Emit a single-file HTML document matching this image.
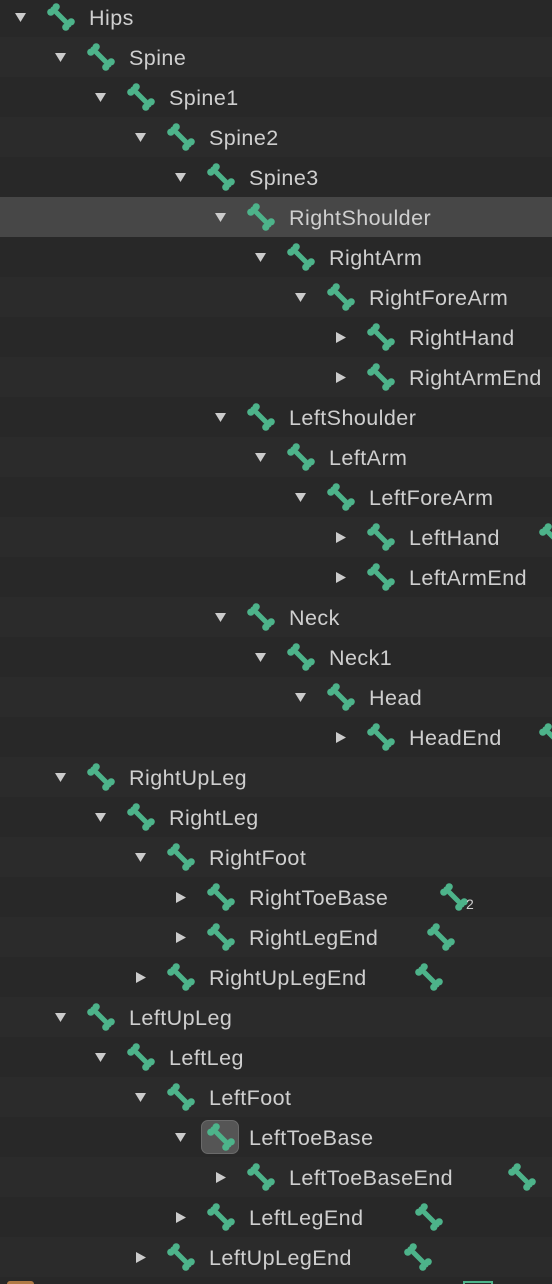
<!DOCTYPE html>
<html><head><meta charset="utf-8"><style>
html,body{margin:0;width:552px;height:1284px;overflow:hidden;background:#282828;font-family:"Liberation Sans",sans-serif;position:relative}
.r{position:absolute;left:0;width:552px;height:40px}
.a{background:#282828}.b{background:#2b2b2b}.h{background:#474747}
.t{position:absolute;top:1px;line-height:40px;color:#cfcfcf;font-size:21.5px;letter-spacing:0.45px;white-space:nowrap}
svg{position:absolute}
.n{position:absolute;color:#cfcfcf;font-size:14px}
</style></head><body>
<svg width="0" height="0" style="position:absolute"><defs>
<g id="bone"><line x1="6" y1="6" x2="22" y2="22" stroke="#4db38a" stroke-width="5" stroke-linecap="round"/><circle cx="3.8" cy="9.2" r="3.6" fill="#4db38a"/><circle cx="9.2" cy="3.8" r="3.6" fill="#4db38a"/><circle cx="18.8" cy="24.2" r="3.6" fill="#4db38a"/><circle cx="24.2" cy="18.8" r="3.6" fill="#4db38a"/></g>
<polygon id="down" points="0,0 11,0 5.5,9" fill="#cccccc"/>
<polygon id="right" points="0,0 10,5.5 0,11" fill="#cccccc"/>
</defs></svg>
<div id="c"></div>
<script>
var rows=[
[0,'Hips','d'],[1,'Spine','d'],[2,'Spine1','d'],[3,'Spine2','d'],[4,'Spine3','d'],
[5,'RightShoulder','d',0,1],[6,'RightArm','d'],[7,'RightForeArm','d'],[8,'RightHand','r'],[8,'RightArmEnd','r'],
[5,'LeftShoulder','d'],[6,'LeftArm','d'],[7,'LeftForeArm','d'],[8,'LeftHand','r',552],[8,'LeftArmEnd','r'],
[5,'Neck','d'],[6,'Neck1','d'],[7,'Head','d'],[8,'HeadEnd','r',552],
[1,'RightUpLeg','d'],[2,'RightLeg','d'],[3,'RightFoot','d'],[4,'RightToeBase','r',453,0,'2'],[4,'RightLegEnd','r',440],[3,'RightUpLegEnd','r',428],
[1,'LeftUpLeg','d'],[2,'LeftLeg','d'],[3,'LeftFoot','d'],[4,'LeftToeBase','d',0,0,0,1],[5,'LeftToeBaseEnd','r',521],[4,'LeftLegEnd','r',428],[3,'LeftUpLegEnd','r',417]
];
var h='';
rows.forEach(function(r,i){
 var top=-3+40*i, x=40*r[0];
 var cls=r[4]?'h':(i%2?'b':'a');
 h+='<div class="r '+cls+'" style="top:'+top+'px">';
 if(r[2]=='d') h+='<svg style="left:'+(x+15)+'px;top:16px" width="11" height="10"><use href="#down"/></svg>';
 else h+='<svg style="left:'+(x+16)+'px;top:15px" width="11" height="12"><use href="#right"/></svg>';
 if(r[6]) h+='<div style="position:absolute;left:'+(x+41)+'px;top:3px;width:38px;height:34px;border-radius:7px;background:#555;border:1.5px solid #6a6a6a;box-sizing:border-box"></div>';
 h+='<svg style="left:'+(x+47)+'px;top:6px" width="29" height="29"><use href="#bone"/></svg>';
 h+='<div class="t" style="left:'+(x+89)+'px">'+r[1]+'</div>';
 if(r[3]){h+='<svg style="left:'+(r[3]-13)+'px;top:6px" width="29" height="29"><use href="#bone"/></svg>';}
 if(r[5]) h+='<div class="n" style="left:'+(r[3]+13)+'px;top:19px">'+r[5]+'</div>';
 h+='</div>';
});
h+='<div class="r a" style="top:1277px;height:7px;overflow:hidden"><div style="position:absolute;left:7px;top:4px;width:27px;height:10px;background:#b07a45;border-radius:3px"></div><div style="position:absolute;left:463px;top:4px;width:26px;height:6px;border:2px solid #4db38a;border-bottom:none"></div></div>';
document.getElementById('c').innerHTML=h;
</script>
</body></html>
